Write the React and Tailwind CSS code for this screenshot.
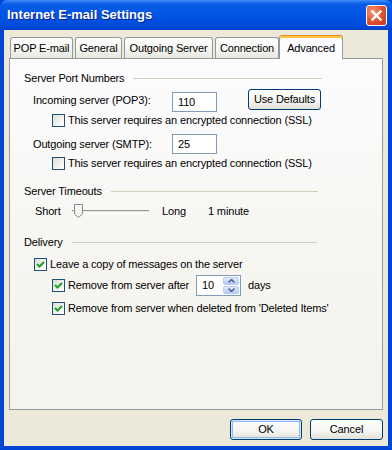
import React from 'react';

const font = { fontFamily: 'Tahoma, "Liberation Sans", Arial, sans-serif', letterSpacing: '-0.15px' };

function CheckBox({ checked }) {
  return (
    <div className="w-[13px] h-[13px] shrink-0 border border-[#1c5180] bg-[linear-gradient(135deg,#dcdcd7_0%,#f4f4f0_60%,#ffffff_100%)] flex items-center justify-center">
      {checked && (
        <svg width="9" height="9" viewBox="0 0 9 9">
          <path d="M1 4 L3.5 6.5 L8 2" fill="none" stroke="#21a121" strokeWidth="2" />
        </svg>
      )}
    </div>
  );
}

function GroupHeader({ label, width }) {
  return (
    <div className="flex items-center h-[14px]" style={{ width }}>
      <span className="text-[11px] text-black leading-none whitespace-nowrap">{label}</span>
      <div className="ml-[9px] flex-1 h-px bg-[#d0d0bf]" />
    </div>
  );
}

function XpButton({ children, def, className = '' }) {
  return (
    <div className={`h-[21px] rounded-[3px] border border-[#003c74] bg-[linear-gradient(180deg,#ffffff_0%,#f4f4f0_60%,#e3e1d6_100%)] flex items-center justify-center text-[11px] text-black ${def ? 'shadow-[inset_0_0_0_1px_#cee7ff,inset_0_0_0_2px_#98b8ea]' : ''} ${className}`}>
      {children}
    </div>
  );
}

export default function App() {
  const tabs = [
    { label: 'POP E-mail', w: 63 },
    { label: 'General', w: 47 },
    { label: 'Outgoing Server', w: 89 },
    { label: 'Connection', w: 64 },
  ];
  return (
    <div className="w-[392px] h-[450px] flex flex-col bg-[#0046d6] overflow-hidden" style={font}>
      {/* title bar */}
      <div className="h-[30px] shrink-0 flex items-center justify-between pl-[7px] pr-[5px] rounded-t-[7px] bg-[linear-gradient(180deg,#3d8ef7_0%,#0a5ce8_14%,#0055e5_50%,#004ad9_88%,#003fc8_100%)]">
        <span className="text-white font-bold text-[13px] tracking-[0px] [text-shadow:1px_1px_0_#0a1f8a]" style={{ fontFamily: '"Trebuchet MS", "Liberation Sans", Arial, sans-serif' }}>
          Internet E-mail Settings
        </span>
        <div className="w-[21px] h-[21px] rounded-[3px] border border-white bg-[radial-gradient(circle_at_30%_30%,#f49a7e_0%,#e25a35_45%,#c2351a_100%)] flex items-center justify-center">
          <svg width="11" height="11" viewBox="0 0 11 11">
            <path d="M1.5 1.5 L9.5 9.5 M9.5 1.5 L1.5 9.5" stroke="#fff" strokeWidth="2.4" strokeLinecap="square" />
          </svg>
        </div>
      </div>

      {/* body */}
      <div className="flex-1 mx-[4px] mb-[4px] bg-[#ece9d8] flex flex-col px-[5px]">
        {/* tabs */}
        <div className="flex items-end h-[28px] pl-[1px]">
          {tabs.map(t => (
            <div key={t.label} className="h-[21px] mr-[2px] border border-b-0 border-[#919b9c] rounded-t-[3px] bg-[linear-gradient(180deg,#ffffff_0%,#f3f3ef_60%,#e8e7e0_100%)] flex items-center justify-center text-[11px] text-black" style={{ width: t.w }}>
              {t.label}
            </div>
          ))}
          <div className="relative -ml-[2px] z-10 w-[64px] h-[24px] -mb-px border border-b-0 border-[#919b9c] rounded-t-[3px] bg-[#fcfcfe] flex items-start justify-center pt-[4px] text-[11px] text-black border-t-[#e68b2c] shadow-[inset_0_2px_0_#ffc73c]">
            Advanced
          </div>
        </div>

        {/* panel */}
        <div className="h-[352px] border border-[#919b9c] bg-[linear-gradient(180deg,#fcfcfe_0%,#f6f5f0_60%,#f4f3ee_100%)] pl-[14px] pt-[12px] text-[11px] text-black">
          <GroupHeader label="Server Port Numbers" width={298} />

          <div className="flex items-start h-[23px] mt-[4px] pl-[9px]">
            <span className="w-[139px] mt-[5px] leading-[13px]">Incoming server (POP3):</span>
            <div className="w-[45px] h-[20px] mt-[3px] border border-[#7f9db9] bg-white flex items-center pl-[5px]">110</div>
            <XpButton className="ml-[31px] w-[73px]">Use Defaults</XpButton>
          </div>

          <div className="flex items-center h-[13px] mt-[2px] pl-[28px]">
            <CheckBox />
            <span className="ml-[3px]">This server requires an encrypted connection (SSL)</span>
          </div>

          <div className="flex items-center h-[20px] mt-[7px] pl-[9px]">
            <span className="w-[139px]">Outgoing server (SMTP):</span>
            <div className="w-[45px] h-[20px] border border-[#7f9db9] bg-white flex items-center pl-[5px]">25</div>
          </div>

          <div className="flex items-center h-[13px] mt-[3px] pl-[28px]">
            <CheckBox />
            <span className="ml-[3px]">This server requires an encrypted connection (SSL)</span>
          </div>

          <div className="mt-[14px]">
            <GroupHeader label="Server Timeouts" width={294} />
          </div>

          <div className="flex items-center h-[16px] mt-[5px] pl-[11px]">
            <span className="w-[37px]">Short</span>
            <div className="relative w-[77px] h-[16px] flex items-center">
              <div className="w-full h-[3px] border-t border-[#9d9c99] border-b border-b-white bg-[#e4e3dc]" />
              <svg className="absolute left-[1px] top-0" width="11" height="16" viewBox="0 0 11 16">
                <path d="M1.5 1.5 H9.5 V11 L5.5 14.5 L1.5 11 Z" fill="#f3f3ef" stroke="#7b8a9c" strokeWidth="1" />
                <path d="M2.5 2.5 H8.5" stroke="#fff" strokeWidth="1" />
              </svg>
            </div>
            <span className="ml-[13px] w-[46px]">Long</span>
            <span>1 minute</span>
          </div>

          <div className="mt-[16px]">
            <GroupHeader label="Delivery" width={293} />
          </div>

          <div className="flex items-center h-[13px] mt-[9px] pl-[10px]">
            <CheckBox checked />
            <span className="ml-[3px]">Leave a copy of messages on the server</span>
          </div>

          <div className="flex items-center h-[21px] mt-[4px] pl-[28px]">
            <CheckBox checked />
            <span className="ml-[3px] w-[128px]">Remove from server after</span>
            <div className="w-[45px] h-[21px] border border-[#7f9db9] bg-white flex items-center pl-[5px] pr-px">
              <span className="flex-1">10</span>
              <div className="w-[16px] h-[17px] flex flex-col gap-px">
                <div className="flex-1 rounded-[2px] bg-[linear-gradient(180deg,#e1eafe_0%,#b4c8f6_100%)] border border-[#b7c9f5] flex items-center justify-center">
                  <svg width="7" height="4" viewBox="0 0 7 4"><path d="M0.5 3.5 L3.5 0.5 L6.5 3.5" fill="none" stroke="#4d6185" strokeWidth="1.5" /></svg>
                </div>
                <div className="flex-1 rounded-[2px] bg-[linear-gradient(180deg,#e1eafe_0%,#b4c8f6_100%)] border border-[#b7c9f5] flex items-center justify-center">
                  <svg width="7" height="4" viewBox="0 0 7 4"><path d="M0.5 0.5 L3.5 3.5 L6.5 0.5" fill="none" stroke="#4d6185" strokeWidth="1.5" /></svg>
                </div>
              </div>
            </div>
            <span className="ml-[7px]">days</span>
          </div>

          <div className="flex items-center h-[13px] mt-[6px] pl-[28px]">
            <CheckBox checked />
            <span className="ml-[3px]">Remove from server when deleted from 'Deleted Items'</span>
          </div>
        </div>

        {/* buttons */}
        <div className="flex justify-end mt-[9px] gap-[8px]">
          <XpButton def className="w-[72px]">OK</XpButton>
          <XpButton className="w-[73px]">Cancel</XpButton>
        </div>
      </div>
    </div>
  );
}
